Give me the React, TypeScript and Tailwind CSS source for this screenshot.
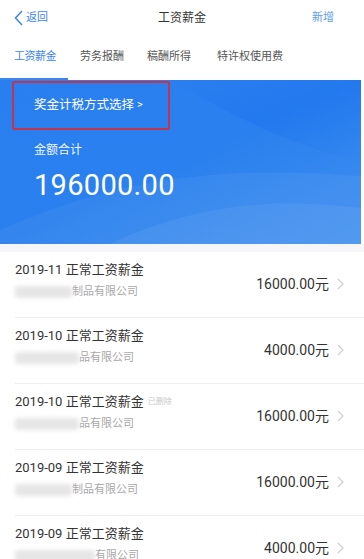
import React from "react";

const font = { fontFamily: 'Roboto, "Noto Sans CJK SC", sans-serif' };

type Row = {
  title: string;
  tag?: string;
  blur: number;
  company: string;
  amount: string;
};

const rows: Row[] = [
  { title: "2019-11 正常工资薪金", blur: 57, company: "制品有限公司", amount: "16000.00元" },
  { title: "2019-10 正常工资薪金", blur: 64, company: "品有限公司", amount: "4000.00元" },
  { title: "2019-10 正常工资薪金", tag: "已删除", blur: 64, company: "品有限公司", amount: "16000.00元" },
  { title: "2019-09 正常工资薪金", blur: 57, company: "制品有限公司", amount: "16000.00元" },
  { title: "2019-09 正常工资薪金", blur: 80, company: "有限公司", amount: "4000.00元" },
];

function Chevron() {
  return (
    <svg width="7" height="12" viewBox="0 0 7 12" className="ml-[8px] mt-[17px] shrink-0">
      <polyline points="1,1 6,6 1,11" fill="none" stroke="#cfcfcf" strokeWidth="1.2" />
    </svg>
  );
}

export default function App() {
  return (
    <div className="w-[364px] h-[559px] overflow-hidden bg-white" style={font}>
      {/* header */}
      <div className="h-[36px] flex items-center px-[14px]">
        <div className="flex items-center w-[80px] text-[11px] text-[#3a86f0]">
          <svg width="9" height="16" viewBox="0 0 9 16" className="mr-[3px]">
            <polyline points="8,1 1.5,8 8,15" fill="none" stroke="#3a86f0" strokeWidth="1.5" />
          </svg>
          返回
        </div>
        <div className="flex-1 text-center text-[12px] text-[#333]">工资薪金</div>
        <div className="w-[80px] text-right pr-[16px] text-[11px] text-[#5b9bf0]">新增</div>
      </div>

      {/* tabs */}
      <div className="h-[44px] flex flex-col">
        <div className="flex-1 flex items-center pl-[14px] text-[11px] text-[#555]">
          <span className="text-[#3a86f0] tracking-[-0.5px]">工资薪金</span>
          <span className="ml-[24px]">劳务报酬</span>
          <span className="ml-[23px]">稿酬所得</span>
          <span className="ml-[26px]">特许权使用费</span>
        </div>
        <div className="h-[2px] w-[68px] bg-[#3a86f0]" />
      </div>

      {/* summary panel */}
      <div className="relative h-[164px] mr-[3px] overflow-hidden bg-gradient-to-br from-[#2a7ff0] via-[#2a80ee] to-[#3f8ff0]">
        <svg className="absolute inset-0" width="361" height="164" viewBox="0 0 361 164">
          <defs>
            <linearGradient id="tr" x1="0" y1="0" x2="1" y2="1">
              <stop offset="0" stopColor="#0d62ee" stopOpacity="0" />
              <stop offset="0.5" stopColor="#0d62ee" stopOpacity="0.25" />
              <stop offset="1" stopColor="#0d62ee" stopOpacity="0" />
            </linearGradient>
          </defs>
          <path d="M0 150 C 90 112, 180 82, 361 96 L361 164 L0 164 Z" fill="#ffffff" opacity="0.05" />
          <path d="M110 164 C 200 122, 280 118, 361 128 L361 164 Z" fill="#ffffff" opacity="0.06" />
          <path d="M170 0 C 240 40, 300 70, 361 80 L361 0 Z" fill="url(#tr)" />
        </svg>
        <div className="relative">
          <div className="ml-[12px] mt-[1px] w-[158px] h-[49px] border-2 border-[#c4344c] rounded-[2px] flex items-center pl-[20px] text-[12.5px] text-white">
            奖金计税方式选择 <span className="ml-[3px] text-[11px]">&gt;</span>
          </div>
          <div className="ml-[34px] mt-[12px] text-[12px] leading-[16px] text-white/95">金额合计</div>
          <div className="ml-[34px] mt-[10px] text-[29px] leading-[34px] tracking-[0.3px] text-white">196000.00</div>
        </div>
      </div>

      {/* gap */}
      <div className="h-[8px] bg-[#f6f6f8]" />

      {/* list */}
      <div>
        {rows.map((r, i) => (
          <div key={i} className={i > 0 ? "ml-[15px] border-t border-[#eeeeee]" : "ml-[15px]"}>
            <div className="h-[65px] flex items-start pt-[9px] pr-[20px]">
              <div className="flex-1">
                <div className="flex items-center h-[18px] text-[13px] text-[#333]">
                  {r.title}
                  {r.tag && <span className="ml-[4px] text-[8px] text-[#c8c8c8]">{r.tag}</span>}
                </div>
                <div className="flex items-center h-[16px] mt-[5px]">
                  <div className="h-[12px] bg-[#e6e6e6] rounded-[3px] blur-[2px]" style={{ width: r.blur }} />
                  <span className="text-[11px] text-[#a8a8a8]">{r.company}</span>
                </div>
              </div>
              <div className="mt-[13px] text-[14px] leading-[20px] text-[#333]">{r.amount}</div>
              <Chevron />
            </div>
          </div>
        ))}
      </div>
    </div>
  );
}
